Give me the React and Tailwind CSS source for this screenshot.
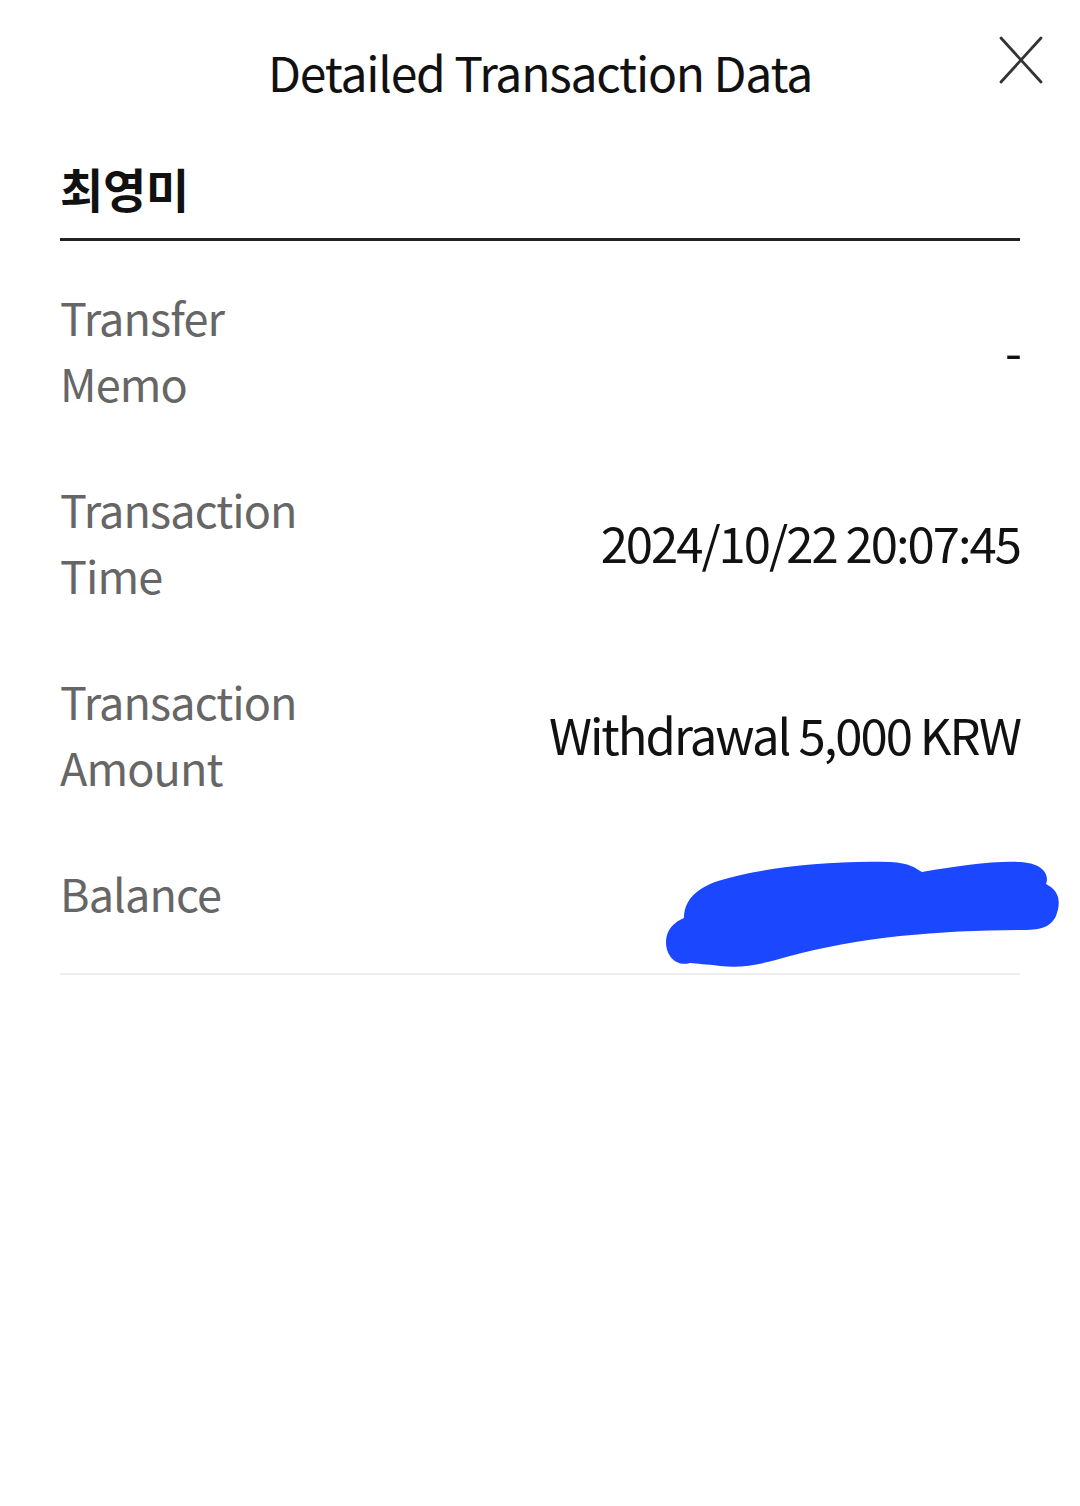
import React from "react";

const rows = [
  { label: ["Transfer", "Memo"], value: "-" },
  { label: ["Transaction", "Time"], value: "2024/10/22 20:07:45" },
  { label: ["Transaction", "Amount"], value: "Withdrawal 5,000 KRW" },
  { label: ["Balance"], value: "", hidden: true },
];

function CloseIcon() {
  return (
    <svg width="44" height="48" viewBox="0 0 44 48" fill="none" aria-hidden="true">
      <path d="M2 2L42 46M42 2L2 46" stroke="#333" strokeWidth="2.8" strokeLinecap="round" />
    </svg>
  );
}

// blue marker scribble drawn over the balance
function Scribble() {
  return (
    <svg
      className="pointer-events-none absolute left-[660px] top-[852px]"
      width="410"
      height="122"
      viewBox="0 0 410 122"
      aria-hidden="true"
    >
      <path
        d="M55 30 C90 18 160 8 230 10 C250 11 255 16 262 20 C300 14 330 9 360 10 C382 11 390 22 386 32 C398 38 402 48 396 64 C390 76 380 78 360 78 C320 78 280 80 240 84 C200 88 160 96 130 104 C105 111 85 117 60 114 C45 112 38 112 30 111 C16 115 6 104 6 90 C6 78 14 70 24 66 C24 50 34 38 55 30 Z"
        fill="#1a47ff"
      />
    </svg>
  );
}

export default function App() {
  return (
    <div
      className="relative min-h-[1506px] w-[1080px] bg-white"
      style={{ fontFamily: '"Noto Sans CJK KR", "Noto Sans", sans-serif' }}
    >
      <header className="relative flex h-[150px] items-start justify-center pt-[36px]">
        <h1 className="text-[48px] leading-[70px] tracking-[-1.2px] text-[#111]">Detailed Transaction Data</h1>
        <button className="absolute right-[37px] top-[36px]" aria-label="Close">
          <CloseIcon />
        </button>
      </header>

      <div className="mx-[60px]">
        <div className="border-b-[3px] border-[#222] pt-[4px] pb-[16px]">
          <p className="text-[47px] font-bold leading-[68px] tracking-[-0.3px] text-[#111]">최영미</p>
        </div>

        <div className="border-b-2 border-[#eeeeee] pt-[13px] pb-[17px]">
          {rows.map((row, i) => (
            <div key={i} className="flex items-center justify-between py-[30px]">
              <div className="text-[45px] leading-[66px] tracking-[-0.9px] text-[#666]">
                {row.label.map((l) => (
                  <div key={l}>{l}</div>
                ))}
              </div>
              <div className="text-[49px] leading-[66px] tracking-[-2px] text-[#111]">{row.value}</div>
            </div>
          ))}
        </div>
      </div>

      <Scribble />
    </div>
  );
}
